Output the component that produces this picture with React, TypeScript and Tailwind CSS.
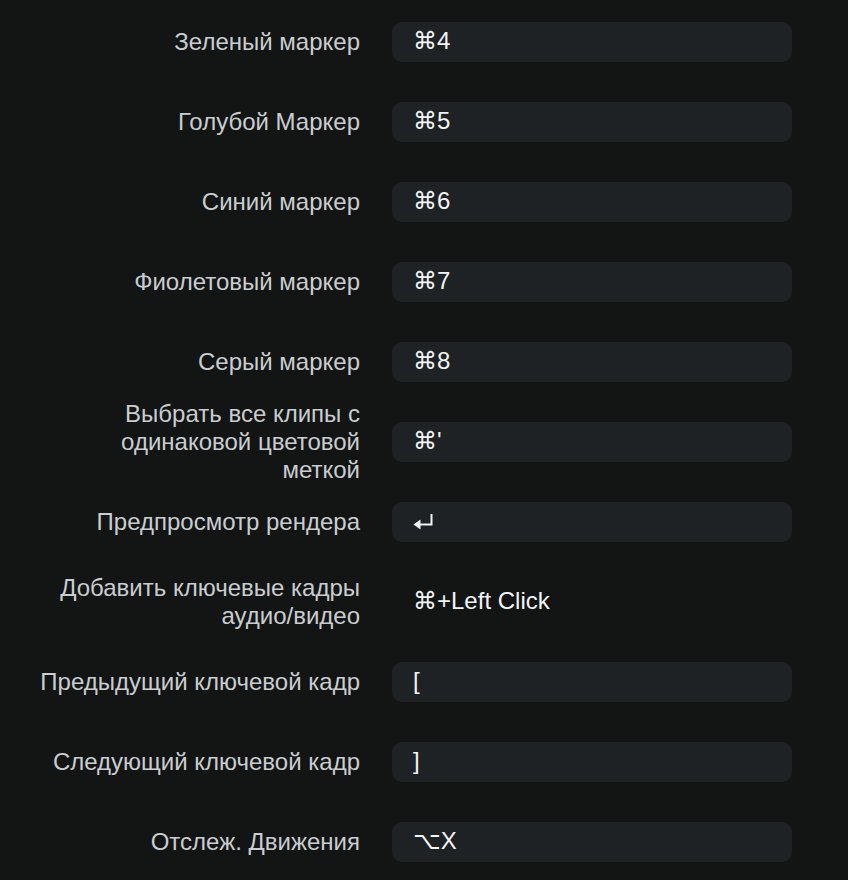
import React from "react";

const ReturnIcon = () => (
  <svg width="20" height="17" viewBox="0 0 20 17" className="block mt-[1px]" fill="none">
    <path d="M18.5 1V11.5H6" stroke="#f2f4f5" strokeWidth="2" />
    <path d="M0.5 11.5L7.5 6.5V16.5Z" fill="#f2f4f5" />
  </svg>
);

const rows: { label: string; value: React.ReactNode; box?: boolean }[] = [
  { label: "Зеленый маркер", value: "⌘4" },
  { label: "Голубой Маркер", value: "⌘5" },
  { label: "Синий маркер", value: "⌘6" },
  { label: "Фиолетовый маркер", value: "⌘7" },
  { label: "Серый маркер", value: "⌘8" },
  { label: "Выбрать все клипы с одинаковой цветовой меткой", value: "⌘'" },
  { label: "Предпросмотр рендера", value: <ReturnIcon /> },
  { label: "Добавить ключевые кадры аудио/видео", value: "⌘+Left Click", box: false },
  { label: "Предыдущий ключевой кадр", value: "[" },
  { label: "Следующий ключевой кадр", value: "]" },
  { label: "Отслеж. Движения", value: "⌥X" },
];

export default function App() {
  return (
    <div
      className="w-[848px] h-[880px] bg-[#131515] pt-[2px] overflow-hidden"
      style={{ fontFamily: '"Liberation Sans", Arial, "DejaVu Sans", sans-serif' }}
    >
      {rows.map((r, i) => (
        <div key={i} className="flex h-20 items-center">
          <div className="w-[320px] ml-10 text-right text-[24px] leading-[28px] text-[#c9cdd0]">
            {r.label}
          </div>
          <div
            className={
              "ml-8 w-[400px] h-10 rounded-[10px] flex items-center pl-[21px] pb-[2px] text-[24px] text-[#f2f4f5] " +
              (r.box === false ? "" : "bg-[#1f2224]")
            }
          >
            {r.value}
          </div>
        </div>
      ))}
    </div>
  );
}
